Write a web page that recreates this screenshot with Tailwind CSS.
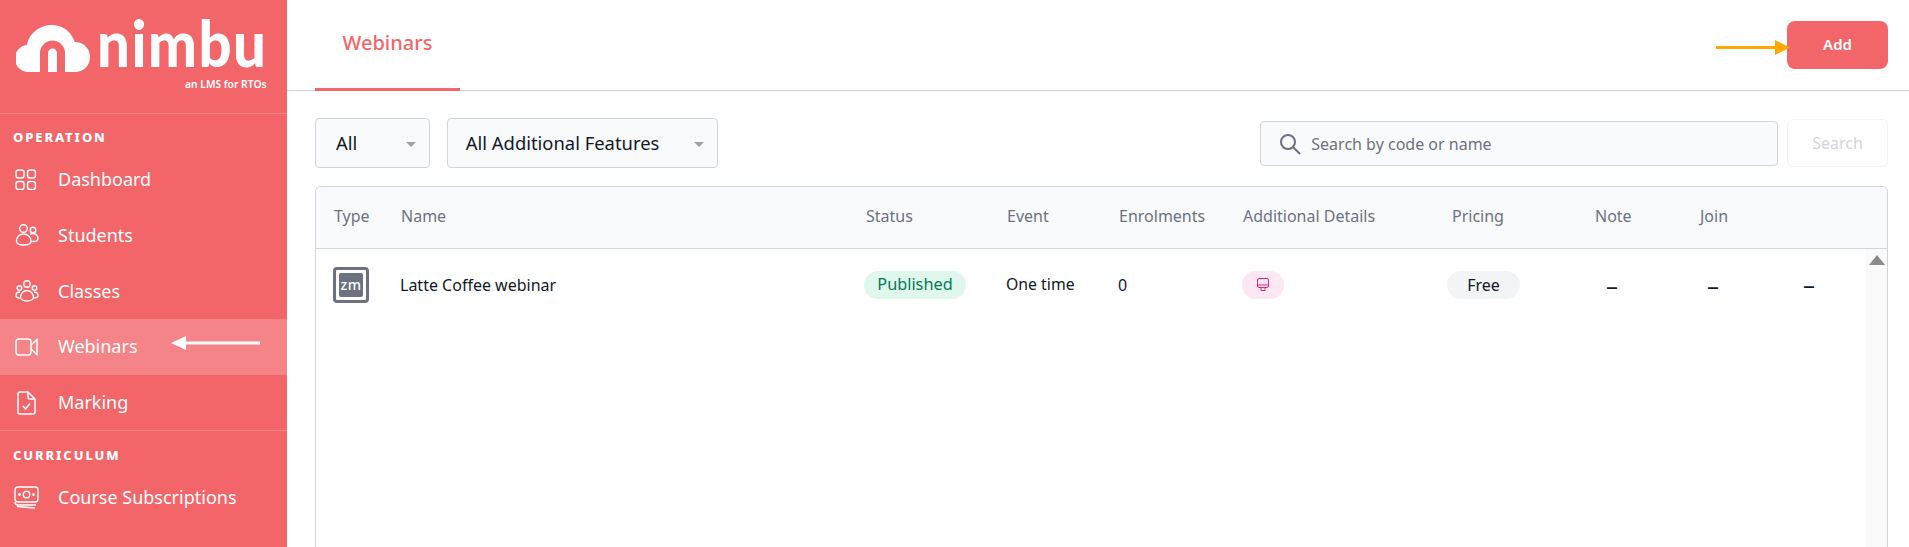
<!DOCTYPE html>
<html>
<head>
<meta charset="utf-8">
<script src="https://cdn.jsdelivr.net/npm/@tailwindcss/browser@4"></script>
</head>
<body class="font-['Noto_Sans',sans-serif] bg-white">
<div class="flex h-[547px] w-[1909px] overflow-hidden">
  <aside class="w-[287px] shrink-0 bg-[#f26669] text-white flex flex-col">
    <div class="relative h-[114px] shrink-0 border-b border-white/20">
      <svg class="absolute left-[16px] top-[25px]" width="74" height="47" viewBox="0 0 74 47">
        <path d="M14 47a13.500 13.500 0 0 1-3-27C13 8 24 0 36 0c9 0 17 5 21 13 1 2 1 3 2 4 8 0 15 6 15 15s-7 15-15 15z" fill="#fff"/>
        <path d="M28 48V28a8.500 8.500 0 0 1 17 0V48" fill="none" stroke="#f26669" stroke-width="8"/>
      </svg>
      <span class="absolute left-[97px] top-[0px] text-[58px] leading-[90px] font-['Lato',sans-serif] font-black tracking-[1.500px] origin-[0_70px] scale-y-[1.1]">nimbu</span>
      <span class="absolute left-[185px] top-[76px] text-[10.300px] leading-[16px] font-semibold whitespace-nowrap">an LMS for RTOs</span>
    </div>
    <div class="h-[37px] pl-[13px] pt-[13px] text-[13px] leading-[20px] font-extrabold tracking-[1.900px]">OPERATION</div>
    <a class="flex items-center h-[56px] pl-[15px] gap-[22px] text-[18px]">
      <svg width="21" height="21" viewBox="0 0 21 21" fill="none" stroke="currentColor" stroke-width="1.500"><rect x="1" y="1" width="8" height="8" rx="2.500"/><rect x="12.500" y="1" width="8" height="8" rx="2.500"/><rect x="1" y="12.500" width="8" height="8" rx="2.500"/><rect x="12.500" y="12.500" width="8" height="8" rx="2.500"/></svg>
      <span>Dashboard</span>
    </a>
    <a class="flex items-center h-[56px] pl-[15px] gap-[22px] text-[18px]">
      <svg width="24" height="24" viewBox="0 0 24 24" fill="none" stroke="currentColor" stroke-width="1.400"><circle cx="8.500" cy="5.500" r="3.800"/><circle cx="18" cy="7" r="2.800"/><path d="M1.500 18c0-4 3-7 7-7s7.500 3 7.500 7c0 3-3 4-7.500 4S1.500 21 1.500 18z"/><path d="M15 11.500c1-.7 2-1 3-1 3 0 5 2.500 5 5 0 2-1.500 3-4 3h-3"/></svg>
      <span class="-ml-[3px]">Students</span>
    </a>
    <a class="flex items-center h-[56px] pl-[15px] gap-[22px] text-[18px]">
      <svg width="24" height="24" viewBox="0 0 24 24" fill="none" stroke="currentColor" stroke-width="1.400"><circle cx="12" cy="5" r="3.200"/><circle cx="4.500" cy="9" r="2.300"/><circle cx="19.500" cy="9" r="2.300"/><path d="M5.500 18c0-3.500 3-6.500 6.500-6.500s6.500 3 6.500 6.500c0 2.500-3 4-6.500 4s-6.500-1.500-6.500-4z"/><path d="M5 13c-2.500 0-4 1.500-4 3.500 0 1.500 2 2.500 4.500 2.500M19 13c2.500 0 4 1.500 4 3.500 0 1.500-2 2.500-4.500 2.500"/></svg>
      <span class="-ml-[3px]">Classes</span>
    </a>
    <a class="relative flex items-center h-[56px] pl-[15px] gap-[22px] text-[18px] bg-white/20">
      <svg width="24" height="20" viewBox="0 0 24 20" fill="none" stroke="currentColor" stroke-width="1.500"><rect x="1" y="2" width="15" height="16" rx="3"/><path d="M16 8l6-5.500v15L16 12"/></svg>
      <span class="-ml-[3px] -mt-[1px]">Webinars</span>
      <svg class="absolute left-[171px] top-[17px]" width="90" height="14" viewBox="0 0 90 14"><path d="M14 5.500H89v3H14z M0 7l15-7v14z" fill="#fff"/></svg>
    </a>
    <a class="flex items-center h-[56px] pl-[17px] gap-[24px] text-[18px] border-b border-white/20">
      <svg width="19" height="24" viewBox="0 0 19 24" fill="none" stroke="currentColor" stroke-width="1.500" stroke-linejoin="round"><path d="M3 1h8l7 7v13a2 2 0 0 1-2 2H3a2 2 0 0 1-2-2V3a2 2 0 0 1 2-2z"/><path d="M11 1v5a2 2 0 0 0 2 2h5M6 15l2.500 3L13 12.500"/></svg>
      <span class="-ml-[2px]">Marking</span>
    </a>
    <div class="h-[38px] pl-[13px] pt-[14px] text-[13px] leading-[20px] font-extrabold tracking-[1.900px]">CURRICULUM</div>
    <a class="flex items-center h-[56px] pl-[14px] gap-[20px] text-[18px]">
      <svg width="25" height="23" viewBox="0 0 25 23" fill="none" stroke="currentColor" stroke-width="1.400"><rect x="1" y="1" width="23" height="15" rx="3"/><circle cx="12.500" cy="8.500" r="3.300"/><circle cx="5.500" cy="8.500" r=".7" fill="currentColor"/><circle cx="19.500" cy="8.500" r=".7" fill="currentColor"/><path d="M1 16c0 2 1 3 3 3h18M3 20.500l18 1.500"/></svg>
      <span class="-ml-[1px]">Course Subscriptions</span>
    </a>
  </aside>
  <main class="flex-1 min-w-0 flex flex-col pr-[21px]">
    <header class="relative -mr-[21px] h-[91px] shrink-0 border-b border-[#d1d5db] flex justify-between pl-[28px] pr-[21px]">
      <div class="w-[145px] h-[91px] border-b-[3px] border-[#f26669] text-[#f26669] text-[20px] font-medium flex justify-center pt-[28px] leading-[30px]">Webinars</div>
      <button class="relative mt-[21px] w-[101px] h-[48px] rounded-[8px] bg-[#f26669] text-white text-[15px] font-semibold pb-[2px]">Add
        <svg class="absolute left-[-71px] top-[19px]" width="75" height="15" viewBox="0 0 75 15"><path d="M0 6h60v3H0z M59 0l15 7.500-15 7.500z" fill="#ffa800"/></svg>
      </button>
    </header>
    <div class="flex items-start pl-[28px] pt-[27px] h-[95px] shrink-0">
      <div class="w-[115px] h-[50px] mt-0 rounded-[4px] border border-[#d1d5db] bg-[#f9fafb] flex items-center justify-between pl-[20px] pr-[13px] text-[18.400px] text-[#111827]">All<span class="w-0 h-0 border-x-[5px] border-x-transparent border-t-[5px] border-t-[#9ca3af] mt-[2px]"></span></div>
      <div class="ml-[17px] w-[272px] h-[50px] rounded-[4px] border border-[#d1d5db] bg-[#f9fafb] flex items-center justify-between pl-[18px] pr-[13px] text-[18.400px] text-[#111827]">All Additional Features<span class="w-0 h-0 border-x-[5px] border-x-transparent border-t-[5px] border-t-[#9ca3af] mt-[2px]"></span></div>
      <div class="ml-[542px] mt-[3px] w-[519px] h-[45px] rounded-[4px] border border-[#d1d5db] bg-[#f9fafb] flex items-center pl-[18px] gap-[10px] text-[16px] text-[#6b7280]">
        <svg width="22" height="22" viewBox="0 0 22 22" fill="none" stroke="#6b7280" stroke-width="2"><circle cx="9" cy="9" r="7"/><path d="M14 14l7 7"/></svg>
        <span>Search by code or name</span>
      </div>
      <button class="ml-[9px] mt-[1px] w-[101px] h-[48px] rounded-[6px] border border-[#f3f4f6] text-[16px] text-[#d1d5db]">Search</button>
    </div>
    <section class="ml-[28px] flex-1 rounded-t-[6px] border border-b-0 border-[#d1d5db] relative overflow-hidden">
      <div class="grid grid-cols-[67px_465px_141px_112px_124px_209px_143px_105px_1fr] items-center h-[62px] bg-[#f9fafb] border-b border-[#d1d5db] text-[16px] leading-[22px] text-[#6b7280] pl-[18px] pb-[3px]">
        <span>Type</span><span>Name</span><span>Status</span><span>Event</span><span>Enrolments</span><span>Additional Details</span><span>Pricing</span><span>Note</span><span>Join</span>
      </div>
      <div class="grid grid-cols-[67px_464px_142px_112px_124px_205px_147px_105px_1fr] items-center h-[70px] text-[16px] text-[#111827] pl-[17px] pt-[1px]">
        <span class="w-[36px] h-[36px] rounded-[4px] border-[3px] border-[#6b7280] p-[3px]"><span class="flex items-center justify-center w-full h-full rounded-[2px] bg-[#6b7280] text-white text-[14px] leading-none font-medium tracking-[0.5px]">zm</span></span>
        <span>Latte Coffee webinar</span>
        <span class="w-[102px] h-[28px] rounded-full bg-[#dff7ec] text-[#047857] flex items-center justify-center text-[16.300px]">Published</span>
        <span class="text-[15.800px]">One time</span>
        <span>0</span>
        <span class="w-[42px] h-[28px] rounded-full bg-[#fce7f3] flex items-center justify-center"><svg width="14" height="15" viewBox="0 0 14 15" fill="none" stroke="#db2777" stroke-width="1"><rect x="1.500" y="1.500" width="11" height="9" rx="1.500"/><path d="M1.500 8h11M5 10.500v3h4v-3"/></svg></span>
        <span class="w-[73px] h-[28px] rounded-full bg-[#f3f4f6] flex items-center justify-center">Free</span>
        <span class="pl-[12px] text-[24px] leading-[24px]">–</span>
        <span class="pl-[8px] text-[24px] leading-[24px]">–</span>
      </div>
      <span class="absolute left-[1487px] top-[85px] text-[24px] leading-[24px] text-[#111827]">–</span>
      <div class="absolute right-0 top-[62px] bottom-0 w-[21px] bg-[#fafafa]"><span class="absolute left-[3px] top-[6px] w-0 h-0 border-x-[8px] border-x-transparent border-b-[10px] border-b-[#8a8a8a]"></span></div>
    </section>
  </main>
</div>
</body>
</html>
